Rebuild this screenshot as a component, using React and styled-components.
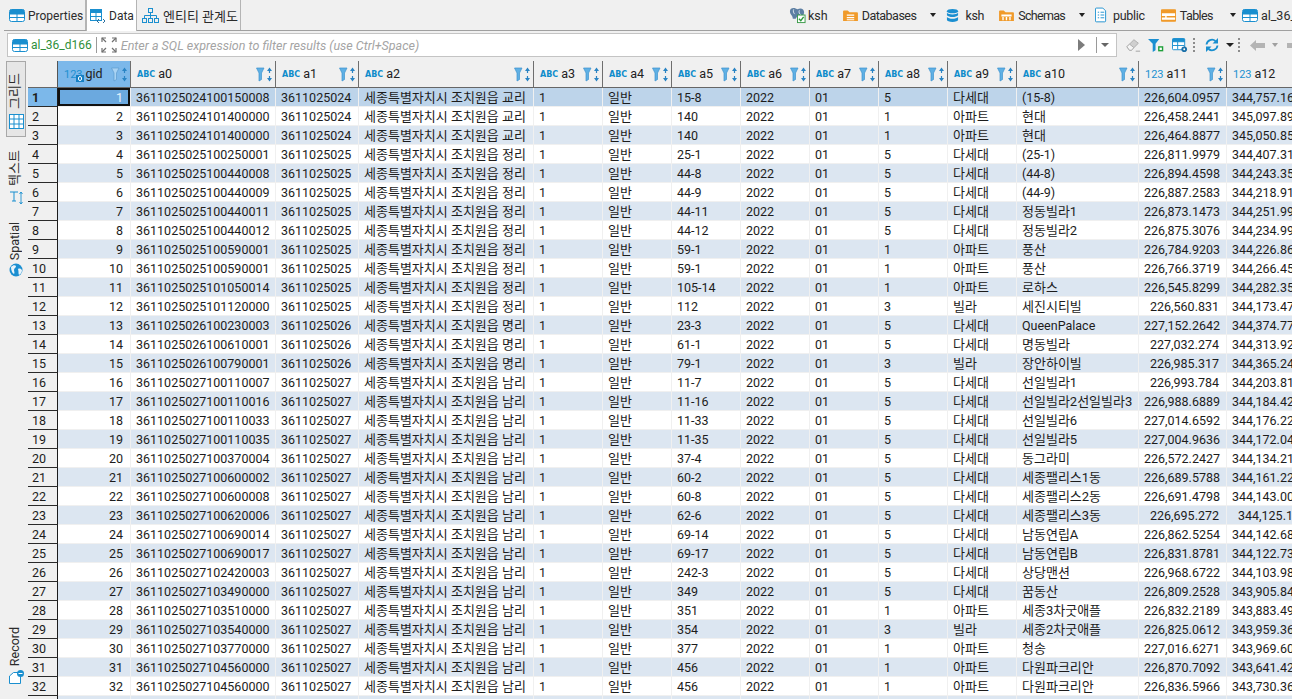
import React from 'react';
import styled, { createGlobalStyle } from 'styled-components';

const FONT = 'Roboto, "Noto Sans CJK KR", sans-serif';
const COLUMNS = '30px 73px 145px 83px 175px 69px 69px 69px 69px 69px 69px 69px 122px 88px 88px';

const GlobalStyle = createGlobalStyle`
  html, body {
    margin: 0;
    padding: 0;
    background: #f0f0f0;
  }
`;

const Page = styled.div`
  width: 1292px;
  height: 699px;
  overflow: hidden;
  display: flex;
  flex-direction: column;
  background: #f0f0f0;
  font-family: ${FONT};
  font-size: 12.5px;
  color: #1c1c1c;
`;

const TopBar = styled.div`
  height: 30px;
  flex: none;
  margin-left: 4px;
  display: flex;
  border-bottom: 1px solid #a0a0a0;
`;

const Tabs = styled.div`
  display: flex;
  flex: none;
`;

const Tab = styled.div`
  display: flex;
  align-items: center;
  gap: ${(p) => p.$gap}px;
  width: ${(p) => p.$width}px;
  height: ${(p) => (p.$active ? '31px' : '30px')};
  padding-left: ${(p) => (p.$active ? '3px' : '5px')};
  padding-top: 1px;
  box-sizing: border-box;
  background: ${(p) => (p.$active ? '#fff' : '#f0f0f0')};
  border-right: 1px solid #b4b4b4;
  border-left: ${(p) => (p.$active ? '1px solid #b4b4b4' : '0')};
  color: #2b2b2b;
  font-size: 12px;
  z-index: 1;
`;

const Hangul = styled.span`
  font-size: 13px;
`;

const Crumbs = styled.div`
  display: flex;
  flex: none;
  align-items: center;
  margin-left: 548px;
  white-space: nowrap;
`;

const Crumb = styled.div`
  display: flex;
  align-items: center;
  gap: ${(p) => p.$inner ?? 4}px;
  margin-left: ${(p) => p.$gap ?? 0}px;
  letter-spacing: ${(p) => p.$spacing ?? 0}px;
  color: #2b2b2b;
`;

const Caret = styled.span`
  flex: none;
  width: 0;
  height: 0;
  margin-left: ${(p) => p.$gap ?? 14}px;
  border-left: ${(p) => (p.$small ? 3 : 4)}px solid transparent;
  border-right: ${(p) => (p.$small ? 3 : 4)}px solid transparent;
  border-top: 4px solid ${(p) => p.$color ?? '#222'};
`;

const FilterRow = styled.div`
  height: 30px;
  flex: none;
  display: flex;
  align-items: flex-start;
  padding: 2px 0 0 7px;
  box-sizing: border-box;
`;

const FilterBox = styled.div`
  width: 1110px;
  height: 24px;
  box-sizing: border-box;
  flex: none;
  display: flex;
  align-items: center;
  background: #fff;
  border: 1px solid #c4c4c4;
  padding: 0 7px 0 4px;
`;

const TableName = styled.span`
  margin-left: 3px;
  font-size: 12px;
  color: #2f8f3a;
`;

const VSep = styled.span`
  width: 1px;
  height: 16px;
  margin: 0 4px;
  background: #9a9a9a;
`;

const Placeholder = styled.span`
  flex: 1;
  margin-left: 4px;
  font-size: 12.5px;
  font-style: italic;
  color: #a4a4a4;
`;

const RunArrow = styled.span`
  width: 0;
  height: 0;
  margin-right: 7px;
  border-top: 6px solid transparent;
  border-bottom: 6px solid transparent;
  border-left: 7px solid #7c7c7c;
`;

const ToolIcons = styled.div`
  display: flex;
  align-items: center;
  height: 24px;
  margin-left: 9px;
`;

const Tool = styled.span`
  display: flex;
  flex: none;
  margin-left: ${(p) => p.$gap ?? 0}px;
`;

const DotSep = styled.span`
  width: 2px;
  height: 15px;
  background: repeating-linear-gradient(#8c8c8c 0 2px, transparent 2px 4px);
`;

const Body = styled.div`
  flex: 1;
  min-height: 0;
  display: flex;
`;

const Rail = styled.div`
  width: 28px;
  flex: none;
  display: flex;
  flex-direction: column;
  align-items: center;
  padding: 0 0 14px 4px;
  box-sizing: border-box;
`;

const RailTab = styled.div`
  display: flex;
  flex-direction: column;
  align-items: center;
  gap: ${(p) => p.$gap ?? 5}px;
  width: 20px;
  box-sizing: border-box;
  padding: ${(p) => (p.$active ? '11px 0 7px' : '0')};
  margin-top: ${(p) => (p.$bottom ? 'auto' : `${p.$top ?? 0}px`)};
  background: ${(p) => (p.$active ? '#e6e6e6' : 'transparent')};
  border: ${(p) => (p.$active ? '1px solid #a8a8a8' : '1px solid transparent')};
`;

const RailLabel = styled.span`
  writing-mode: vertical-rl;
  text-orientation: sideways;
  transform: rotate(180deg);
  font-size: ${(p) => (p.$hangul ? '13px' : '12.5px')};
  line-height: 16px;
  margin-right: 2px;
  color: #2b2b2b;
`;

const Grid = styled.div`
  flex: 1;
  min-width: 0;
  overflow: hidden;
`;

const Row = styled.div`
  display: grid;
  grid-template-columns: ${COLUMNS};
  height: ${(p) => (p.$head ? '27px' : '19px')};
  width: 1400px;
`;

const Corner = styled.div`
  background: #f0f0f0;
  border-right: 1px solid #555;
  border-bottom: 1px solid #666;
  box-sizing: border-box;
`;

const HeadCell = styled.div`
  display: flex;
  align-items: center;
  padding: 0 3px 0 6px;
  box-sizing: border-box;
  background: ${(p) => (p.$active ? '#7cb8ea' : '#f0f0f0')};
  border-right: 1px solid #6e6e6e;
  border-bottom: 1px solid #666;
  color: #222;
`;

const TypeText = styled.span`
  color: #0f8ccb;
  font-weight: 700;
  font-size: 8px;
  margin-right: 3px;
  font-family: "DejaVu Sans", sans-serif;
`;

const TypeNumber = styled.span`
  position: relative;
  color: #2090d0;
  font-size: 11px;
  margin-right: 3px;
`;

const KeyBadge = styled.span`
  position: absolute;
  right: -1px;
  bottom: -1px;
  width: 8px;
  height: 7px;
  background: #1580c4;

  &::after {
    content: '';
    position: absolute;
    left: 2px;
    top: 1px;
    width: 2px;
    height: 3px;
    border: 1px solid #fff;
    border-radius: 2px;
  }
`;

const HeadName = styled.span`
  flex: 1;
  line-height: 1;
`;

const RowHead = styled.div`
  display: flex;
  align-items: center;
  padding-left: 4px;
  box-sizing: border-box;
  background: ${(p) => (p.$active ? '#7cb8ea' : '#f0f0f0')};
  border-right: 1px solid #1c1c1c;
  border-bottom: 1px solid #2a2a2a;
  font-weight: ${(p) => (p.$active ? 700 : 400)};
`;

const rowBg = (p) => {
  if (p.$selected) return '#6ba9df';
  if (p.$current) return '#bdd4ea';
  return p.$striped ? '#dce6f1' : '#fff';
};

const Cell = styled.div`
  box-sizing: border-box;
  padding: 0 ${(p) => (p.$right ? '7px' : '2px')} 0 5px;
  text-align: ${(p) => (p.$right ? 'right' : 'left')};
  white-space: nowrap;
  overflow: hidden;
  line-height: 19px;
  font-size: ${(p) => (p.$hangul ? '13px' : '12.5px')};
  background: ${rowBg};
  color: ${(p) => (p.$selected ? '#e8f2fb' : '#1c1c1c')};
  border-right: 1px solid #f0f0f0;
  border-bottom: 1px solid #f0f0f0;
  ${(p) => p.$selected && 'box-shadow: inset 0 0 0 2px #111;'}
`;

const FlipSvg = styled.svg`
  transform: ${(p) => (p.$flip ? 'scaleX(-1)' : 'none')};
`;

function TableIcon({ color = '#1a8fcf' }) {
  return (
    <svg width="16" height="13" viewBox="0 0 16 13">
      <rect x="0.5" y="0.5" width="15" height="12" rx="2" fill="#fff" stroke={color} />
      <path d="M1 1.5a1 1 0 0 1 1-1h12a1 1 0 0 1 1 1V5H1z" fill={color} />
      <path d="M8 1v11M1 8.5h14M1 5h14" stroke={color} fill="none" />
    </svg>
  );
}

function DataIcon() {
  return (
    <svg width="16" height="15" viewBox="0 0 16 15">
      <rect x="0.5" y="0.5" width="11" height="11" fill="#fff" stroke="#1a8fcf" />
      <path d="M1 1h10v3H1z" fill="#1a8fcf" />
      <path d="M6 1v10M1 7.5h10" stroke="#1a8fcf" />
      <path d="M9 10l-2 2 2 2M13 10l2 2-2 2" stroke="#2b6f9e" fill="none" />
    </svg>
  );
}

function ErIcon() {
  return (
    <svg width="17" height="17" viewBox="0 0 17 17" fill="none" stroke="#1a8fcf">
      <rect x="6.5" y="1.5" width="4" height="4" />
      <rect x="0.5" y="11.5" width="4" height="4" />
      <rect x="6.5" y="11.5" width="4" height="4" />
      <rect x="12.5" y="11.5" width="4" height="4" />
      <path d="M8.5 5.5v6M2.5 11.5V8.5h12v3" />
    </svg>
  );
}

function ElephantIcon() {
  return (
    <svg width="17" height="17" viewBox="0 0 18 17">
      <path d="M1 4c0-3 3-4 6-3l2 1c3-2 7-1 7 3 0 3-2 4-2 7H10L9 9 7 12H4C4 8 1 8 1 4z" fill="#5d7fa3" />
      <path d="M5 2c-1 2 0 4 1 5M11 3c-1 2 0 4 2 5" stroke="#dfe7ef" fill="none" />
      <rect x="9" y="8" width="8" height="8" fill="#fff" stroke="#3a9a48" />
      <path d="M10.5 12l2 2 3-4" stroke="#2d9a3c" strokeWidth="1.5" fill="none" />
    </svg>
  );
}

function FolderIcon({ kind }) {
  return (
    <svg width="15" height="13" viewBox="0 0 16 14">
      <path d="M0 2.5A1 1 0 0 1 1 1.5h4l2 2h8a1 1 0 0 1 1 1V13H0z" fill="#f09a2a" />
      {kind === 'db' && <path d="M4 6h8v1.4H4zM4 8.6h8V10H4zM4 11h8v1H4z" fill="#fff" />}
      {kind === 'schema' && <path d="M2.5 6h11v2h-11zM3.5 8.5h1.5V12H3.5zM7.2 8.5h1.5V12H7.2zM11 8.5h1.5V12H11z" fill="#fff" />}
    </svg>
  );
}

function CylinderIcon() {
  return (
    <svg width="13" height="15" viewBox="0 0 14 15">
      <path d="M1 2.8C1 1.3 3.7.5 7 .5s6 .8 6 2.3S10.3 5 7 5 1 4.3 1 2.8z" fill="#1b8fd1" />
      <path d="M1 4.6C2 6 4.5 6.4 7 6.4S12 6 13 4.6V7.3C12 8.7 9.5 9.2 7 9.2S2 8.7 1 7.3z" fill="#1b8fd1" />
      <path d="M1 9C2 10.4 4.5 10.9 7 10.9S12 10.4 13 9v3.2c0 1.4-2.7 2.3-6 2.3s-6-.9-6-2.3z" fill="#1b8fd1" />
    </svg>
  );
}

function SchemaDocIcon() {
  return (
    <svg width="12" height="16" viewBox="0 0 13 16" fill="none" stroke="#1a8fcf">
      <path d="M.5 1.5a1 1 0 0 1 1-1h7l3 3v10.9a1 1 0 0 1-1 1h-9a1 1 0 0 1-1-1z" fill="#fff" />
      <path d="M3 5h1.5M6 5h4M3 8h1.5M6 8h4M3 11h1.5M6 11h4" />
    </svg>
  );
}

function OrangeTableIcon() {
  return (
    <svg width="15" height="13" viewBox="0 0 16 13">
      <rect x="0.5" y="0.5" width="15" height="12" rx="1" fill="#fff" stroke="#f09a2a" />
      <path d="M0 0h16v4H0zM0 7h4.5v1.5H0zM6 7h10v1.5H6zM0 11h16v2H0z" fill="#f09a2a" />
    </svg>
  );
}

function ExpandIcon() {
  return (
    <svg width="16" height="16" viewBox="0 0 16 16" fill="none" stroke="#6f6f6f" strokeWidth="1.2">
      <path d="M1 5V1h4M11 1h4v4M15 11v4h-4M5 15H1v-4" />
      <path d="M1 1l4 4M15 1l-4 4M15 15l-4-4M1 15l4-4" />
    </svg>
  );
}

function EraserIcon() {
  return (
    <svg width="15" height="16" viewBox="0 0 17 16">
      <path d="M1 10l8-8 5 4-8 8H4z" fill="#cfcfcf" stroke="#a9a9a9" />
      <path d="M1 10l3-3 5 4-3 3H4z" fill="#f5f5f5" stroke="#a9a9a9" />
      <path d="M11 15h5" stroke="#9c9c9c" />
    </svg>
  );
}

function FunnelGreenIcon() {
  return (
    <svg width="16" height="15" viewBox="0 0 17 16">
      <path d="M0 1h12L8 6v7L5 15V6z" fill="#1b8fd1" />
      <rect x="11.5" y="9.5" width="4" height="4" fill="#fff" stroke="#1fa03a" strokeWidth="1.5" />
    </svg>
  );
}

function TableGearIcon() {
  return (
    <svg width="16" height="15" viewBox="0 0 17 16">
      <rect x="0.5" y="0.5" width="13" height="12" rx="1" fill="#fff" stroke="#1a8fcf" />
      <path d="M1 1h12v3H1zM6 4v8" fill="#1a8fcf" stroke="#1a8fcf" />
      <path d="M1 8h12" stroke="#1a8fcf" />
      <circle cx="13" cy="12" r="3" fill="#1a6fa8" />
      <circle cx="13" cy="12" r="1" fill="#fff" />
    </svg>
  );
}

function RefreshIcon() {
  return (
    <svg width="16" height="16" viewBox="0 0 16 16" fill="none" stroke="#1a8fcf" strokeWidth="1.8">
      <path d="M2.5 7.5a5.5 5.5 0 0 1 9-3.5" />
      <path d="M13.5 8.5a5.5 5.5 0 0 1-9 3.5" />
      <path d="M14 1v5.5H8.5zM2 15V9.5h5.5z" fill="#1a8fcf" stroke="none" />
    </svg>
  );
}

function BackIcon({ flip }) {
  return (
    <FlipSvg $flip={flip} width="15" height="11" viewBox="0 0 15 11">
      <path d="M0 5.5L6 0v3h9v5H6v3z" fill="#b4b4b4" />
    </FlipSvg>
  );
}

function SortFilter({ active }) {
  const fill = active ? '#a9d3f3' : '#5fb0e4';
  const stroke = active ? '#5d9bcf' : '#3d93d0';
  return (
    <svg width="16" height="15" viewBox="0 0 16 15">
      <path d="M.5 1h7.5L5.5 6v6.5L3 14V6z" fill={fill} stroke={stroke} strokeWidth="0.7" />
      <path d="M13.5 3v3M13.5 9v3" stroke="#2a84c4" strokeWidth="1.2" />
      <path d="M11 4l2.5-3.5L16 4zM11 11l2.5 3.5L16 11z" fill="#2a84c4" />
    </svg>
  );
}

function GridIcon() {
  return (
    <svg width="15" height="15" viewBox="0 0 15 15" fill="#fff" stroke="#1a8fcf">
      <rect x="0.5" y="0.5" width="14" height="14" />
      <path d="M5 1v13M10 1v13M1 5h13M1 10h13" fill="none" />
    </svg>
  );
}

function TextModeIcon() {
  return (
    <svg width="14" height="14" viewBox="0 0 14 14" fill="none" stroke="#1a8fcf">
      <path d="M1 1h8M5 1v9M3 10h4" />
      <path d="M12 1v12M10.5 3L12 1l1.5 2M10.5 11l1.5 2 1.5-2" strokeWidth="0.9" />
    </svg>
  );
}

function GlobeIcon() {
  return (
    <svg width="14" height="14" viewBox="0 0 14 14">
      <circle cx="7" cy="7" r="6.5" fill="#1b8fd1" />
      <path d="M2 4c2-2 4-2 5-1 0 2-2 2-2 4 0 1 1 3 0 4C3 10 2 7 2 4zM9 6c2-1 3 0 4 1 0 2-1 4-3 5-1-2 0-3-1-6z" fill="#eaf4fb" />
    </svg>
  );
}

function RecordIcon() {
  return (
    <svg width="15" height="14" viewBox="0 0 15 14" fill="none" stroke="#1a8fcf">
      <path d="M.5 13.5V6l4-3.5h7v11z" fill="#fff" />
      <circle cx="11.5" cy="3.5" r="3.5" fill="#1a8fcf" stroke="none" />
      <path d="M9.5 3.5h4" stroke="#fff" />
    </svg>
  );
}

const ADDR = '세종특별자치시 조치원읍 ';
const HANGUL = /[가-힣]/;
const COLS = [
  ['a0', 'abc'], ['a1', 'abc'], ['a2', 'abc'], ['a3', 'abc'], ['a4', 'abc'], ['a5', 'abc'],
  ['a6', 'abc'], ['a7', 'abc'], ['a8', 'abc'], ['a9', 'abc'], ['a10', 'abc'], ['a11', 'num'], ['a12', 'num'],
];

// a0, 리, a5, a8, a9, a10, a11, a12
const ROWS = [
  ['3611025024100150008', '교리', '15-8', '5', '다세대', '(15-8)', '226,604.0957', '344,757.1642'],
  ['3611025024101400000', '교리', '140', '1', '아파트', '현대', '226,458.2441', '345,097.8912'],
  ['3611025024101400000', '교리', '140', '1', '아파트', '현대', '226,464.8877', '345,050.8534'],
  ['3611025025100250001', '정리', '25-1', '5', '다세대', '(25-1)', '226,811.9979', '344,407.3127'],
  ['3611025025100440008', '정리', '44-8', '5', '다세대', '(44-8)', '226,894.4598', '344,243.3561'],
  ['3611025025100440009', '정리', '44-9', '5', '다세대', '(44-9)', '226,887.2583', '344,218.9145'],
  ['3611025025100440011', '정리', '44-11', '5', '다세대', '정동빌라1', '226,873.1473', '344,251.9923'],
  ['3611025025100440012', '정리', '44-12', '5', '다세대', '정동빌라2', '226,875.3076', '344,234.9981'],
  ['3611025025100590001', '정리', '59-1', '1', '아파트', '풍산', '226,784.9203', '344,226.8654'],
  ['3611025025100590001', '정리', '59-1', '1', '아파트', '풍산', '226,766.3719', '344,266.4510'],
  ['3611025025101050014', '정리', '105-14', '1', '아파트', '로하스', '226,545.8299', '344,282.3577'],
  ['3611025025101120000', '정리', '112', '3', '빌라', '세진시티빌', '226,560.831', '344,173.4736'],
  ['3611025026100230003', '명리', '23-3', '5', '다세대', 'QueenPalace', '227,152.2642', '344,374.7718'],
  ['3611025026100610001', '명리', '61-1', '5', '다세대', '명동빌라', '227,032.274', '344,313.9265'],
  ['3611025026100790001', '명리', '79-1', '3', '빌라', '장안하이빌', '226,985.317', '344,365.2440'],
  ['3611025027100110007', '남리', '11-7', '5', '다세대', '선일빌라1', '226,993.784', '344,203.8136'],
  ['3611025027100110016', '남리', '11-16', '5', '다세대', '선일빌라2선일빌라3', '226,988.6889', '344,184.4258'],
  ['3611025027100110033', '남리', '11-33', '5', '다세대', '선일빌라6', '227,014.6592', '344,176.2207'],
  ['3611025027100110035', '남리', '11-35', '5', '다세대', '선일빌라5', '227,004.9636', '344,172.0493'],
  ['3611025027100370004', '남리', '37-4', '5', '다세대', '동그라미', '226,572.2427', '344,134.2116'],
  ['3611025027100600002', '남리', '60-2', '5', '다세대', '세종팰리스1동', '226,689.5788', '344,161.2275'],
  ['3611025027100600008', '남리', '60-8', '5', '다세대', '세종팰리스2동', '226,691.4798', '344,143.0042'],
  ['3611025027100620006', '남리', '62-6', '5', '다세대', '세종팰리스3동', '226,695.272', '344,125.132'],
  ['3611025027100690014', '남리', '69-14', '5', '다세대', '남동연립A', '226,862.5254', '344,142.6871'],
  ['3611025027100690017', '남리', '69-17', '5', '다세대', '남동연립B', '226,831.8781', '344,122.7339'],
  ['3611025027102420003', '남리', '242-3', '5', '다세대', '상당맨션', '226,968.6722', '344,103.9806'],
  ['3611025027103490000', '남리', '349', '5', '다세대', '꿈동산', '226,809.2528', '343,905.8412'],
  ['3611025027103510000', '남리', '351', '1', '아파트', '세종3차굿애플', '226,832.2189', '343,883.4950'],
  ['3611025027103540000', '남리', '354', '3', '빌라', '세종2차굿애플', '226,825.0612', '343,959.3644'],
  ['3611025027103770000', '남리', '377', '1', '아파트', '청송', '227,016.6271', '343,969.6023'],
  ['3611025027104560000', '남리', '456', '1', '아파트', '다원파크리안', '226,870.7092', '343,641.4218'],
  ['3611025027104560000', '남리', '456', '1', '아파트', '다원파크리안', '226,836.5966', '343,730.3691'],
];

function DataRow({ row, index }) {
  const [id, ri, a5, a8, a9, a10, a11, a12] = row;
  const current = index === 0;
  const striped = index % 2 === 0;
  const values = [id, id.slice(0, 10), ADDR + ri, '1', '일반', a5, '2022', '01', a8, a9, a10];
  return (
    <Row>
      <RowHead $active={current}>{index + 1}</RowHead>
      <Cell $right $selected={current} $striped={striped}>{index + 1}</Cell>
      {values.map((v, i) => (
        <Cell key={i} $current={current} $striped={striped} $hangul={HANGUL.test(v)}>{v}</Cell>
      ))}
      <Cell $right $current={current} $striped={striped}>{a11}</Cell>
      <Cell $right $current={current} $striped={striped}>{a12}</Cell>
    </Row>
  );
}

export default function App() {
  return (
    <Page>
      <GlobalStyle />
      <TopBar>
        <Tabs>
          <Tab $width={82} $gap={3}><TableIcon /> Properties</Tab>
          <Tab $active $width={51} $gap={3}><DataIcon /> Data</Tab>
          <Tab $width={104} $gap={4}><ErIcon /> <Hangul>엔티티 관계도</Hangul></Tab>
        </Tabs>
        <Crumbs>
          <Crumb $inner={2}><ElephantIcon /> ksh</Crumb>
          <Crumb $gap={15} $spacing={-0.5}><FolderIcon kind="db" /> Databases</Crumb>
          <Caret $small />
          <Crumb $gap={10} $inner={6} $spacing={-0.3}><CylinderIcon /> ksh</Crumb>
          <Crumb $gap={15} $spacing={-0.7}><FolderIcon kind="schema" /> Schemas</Crumb>
          <Caret $small />
          <Crumb $gap={10} $inner={6} $spacing={-0.3}><SchemaDocIcon /> public</Crumb>
          <Crumb $gap={16} $spacing={-0.6}><OrangeTableIcon /> Tables</Crumb>
          <Caret $small $gap={17} />
          <Crumb $gap={6} $inner={3}><TableIcon /> al_36_d166</Crumb>
        </Crumbs>
      </TopBar>
      <FilterRow>
        <FilterBox>
          <TableIcon />
          <TableName>al_36_d166</TableName>
          <VSep />
          <ExpandIcon />
          <Placeholder>Enter a SQL expression to filter results (use Ctrl+Space)</Placeholder>
          <RunArrow />
          <VSep />
          <Caret $gap={0} $color="#666" />
        </FilterBox>
        <ToolIcons>
          <Tool><EraserIcon /></Tool>
          <Tool $gap={7}><FunnelGreenIcon /></Tool>
          <Tool $gap={8}><TableGearIcon /></Tool>
          <Tool $gap={5}><DotSep /></Tool>
          <Tool $gap={9}><RefreshIcon /></Tool>
          <Caret $gap={6} />
          <Tool $gap={4}><DotSep /></Tool>
          <Tool $gap={10}><BackIcon /></Tool>
          <Caret $gap={7} $small $color="#a0a0a0" />
          <Tool $gap={9}><BackIcon flip /></Tool>
        </ToolIcons>
      </FilterRow>
      <Body>
        <Rail>
          <RailTab $active>
            <RailLabel $hangul>그리드</RailLabel>
            <GridIcon />
          </RailTab>
          <RailTab $top={12}>
            <RailLabel $hangul>텍스트</RailLabel>
            <TextModeIcon />
          </RailTab>
          <RailTab $top={15} $gap={3}>
            <RailLabel>Spatial</RailLabel>
            <GlobeIcon />
          </RailTab>
          <RailTab $bottom $gap={4}>
            <RailLabel>Record</RailLabel>
            <RecordIcon />
          </RailTab>
        </Rail>
        <Grid>
          <Row $head>
            <Corner />
            <HeadCell $active>
              <TypeNumber>123<KeyBadge /></TypeNumber>
              <HeadName>gid</HeadName>
              <SortFilter active />
            </HeadCell>
            {COLS.map(([name, type]) => (
              <HeadCell key={name}>
                {type === 'abc' ? <TypeText>ABC</TypeText> : <TypeNumber>123</TypeNumber>}
                <HeadName>{name}</HeadName>
                <SortFilter />
              </HeadCell>
            ))}
          </Row>
          {ROWS.map((row, i) => (
            <DataRow key={i} row={row} index={i} />
          ))}
          <Row>
            <RowHead />
            <Cell $striped />
            {COLS.map(([name]) => (
              <Cell key={name} $striped />
            ))}
          </Row>
        </Grid>
      </Body>
    </Page>
  );
}
